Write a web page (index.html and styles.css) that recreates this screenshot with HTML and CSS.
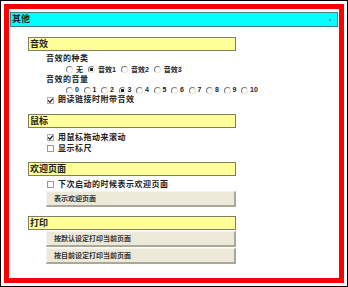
FILE: index.html
```html
<!doctype html>
<html>
<head>
	<meta charset="utf-8">
	<title>其他</title>
	<link rel="stylesheet" href="styles.css">
</head>
<body>
	<div class="frame">
		<div class="panel">
			<div class="title"><span>其他</span><span class="title__dot"></span></div>

			<div class="section section--sound">
				<div class="bar">音效</div>
				<div class="row row--label">音效的种类</div>
				<div class="row row--radios">
					<span class="opt"><i class="radio"></i>无</span>
					<span class="opt"><i class="radio radio--on"></i>音效1</span>
					<span class="opt"><i class="radio"></i>音效2</span>
					<span class="opt"><i class="radio"></i>音效3</span>
				</div>
				<div class="row row--label row--short">音效的音量</div>
				<div class="row row--radios row--short row--nums">
					<span class="opt"><i class="radio"></i>0</span>
					<span class="opt"><i class="radio"></i>1</span>
					<span class="opt"><i class="radio"></i>2</span>
					<span class="opt"><i class="radio radio--on"></i>3</span>
					<span class="opt"><i class="radio"></i>4</span>
					<span class="opt"><i class="radio"></i>5</span>
					<span class="opt"><i class="radio"></i>6</span>
					<span class="opt"><i class="radio"></i>7</span>
					<span class="opt"><i class="radio"></i>8</span>
					<span class="opt"><i class="radio"></i>9</span>
					<span class="opt"><i class="radio"></i>10</span>
				</div>
				<div class="row row--check row--short">
					<i class="check check--on"><svg viewBox="0 0 7 7" width="7" height="7"><path d="M1.2 3.4 L2.9 5.2 L5.8 1.6" fill="none" stroke="#222" stroke-width="1.3"/></svg></i>朗读链接时附带音效
				</div>
			</div>

			<div class="section section--mouse">
				<div class="bar">鼠标</div>
				<div class="row row--check">
					<i class="check check--on"><svg viewBox="0 0 7 7" width="7" height="7"><path d="M1.2 3.4 L2.9 5.2 L5.8 1.6" fill="none" stroke="#222" stroke-width="1.3"/></svg></i>用鼠标拖动来滚动
				</div>
				<div class="row row--check">
					<i class="check"></i>显示标尺
				</div>
			</div>

			<div class="section section--welcome">
				<div class="bar">欢迎页面</div>
				<div class="row row--check">
					<i class="check"></i>下次启动的时候表示欢迎页面
				</div>
				<button class="btn">表示欢迎页面</button>
			</div>

			<div class="section section--print">
				<div class="bar">打印</div>
				<button class="btn">按默认设定打印当前页面</button>
				<button class="btn">按目前设定打印当前页面</button>
			</div>
		</div>
	</div>
</body>
</html>
```
FILE: styles.css
```css
html, body { margin: 0; padding: 0; background: #fff; }
body { font-family: "Liberation Sans", "Noto Sans CJK SC", sans-serif; font-size: 8px; color: #222; }

.frame { width: 348px; height: 287px; box-sizing: border-box; border: 1px solid #000; padding: 3px; background: #fff; }
.panel { height: 100%; box-sizing: border-box; border: 5px solid #f00; padding: 3px 1px 0 1px; }

.title { height: 15px; box-sizing: border-box; border: 1px solid #3f7f7f; background: #0ff; font-weight: bold; font-size: 9px; line-height: 13px; padding: 0 6px 0 1px; display: flex; justify-content: space-between; align-items: center; }
.title__dot { width: 2px; height: 2px; background: #6a9a9a; }

.section { margin-left: 18px; width: 208px; }
.section--sound { margin-top: 10px; }
.section--mouse { margin-top: 9px; }
.section--welcome { margin-top: 8px; }
.section--print { margin-top: 9px; }

.bar { height: 14px; box-sizing: border-box; border: 1px solid #7f7f5f; background: #ffff99; font-weight: bold; font-size: 9px; line-height: 12px; padding-left: 1px; }

.row { height: 11px; line-height: 11px; font-weight: bold; letter-spacing: 0.5px; white-space: nowrap; display: flex; align-items: center; }
.row--short { height: 10px; line-height: 10px; }
.section--sound .bar + .row { margin-top: 2px; }
.section--mouse .bar + .row { margin-top: 4px; }
.section--welcome .bar + .row { margin-top: 3px; }

.row--label { padding-left: 18px; }
.row--radios { padding-left: 38px; font-size: 7px; letter-spacing: 0; }
.row--check { padding-left: 19px; }

.opt { display: inline-flex; align-items: center; margin-right: 5px; }
.row--nums .opt { margin-right: 4.6px; }

.radio { display: inline-block; width: 7px; height: 7px; box-sizing: border-box; border-radius: 50%; border: 1px solid; border-color: #7a7a7a #e2e2e2 #e2e2e2 #7a7a7a; margin-right: 3px; }
.row--nums .radio { margin-right: 2px; }
.radio--on { background: radial-gradient(circle, #222 0, #222 1.4px, transparent 1.8px); }

.check { display: inline-flex; width: 7px; height: 7px; box-sizing: border-box; border: 1px solid #9a9a9a; margin-right: 4px; align-items: center; justify-content: center; }
.check--on { border-color: #b0b0b0; }
.check svg { display: block; margin: -1px; flex: none; }

.btn { display: block; margin: 1px 0 0 18px; width: 190px; height: 16px; box-sizing: border-box; padding: 0 0 0 7px; text-align: left; background: #ece9d8; border: 0; border-top: 1px solid #f4f3ec; border-left: 1px solid #f4f3ec; border-right: 2px solid #aca899; border-bottom: 2px solid #aca899; font-family: "Liberation Sans", "Noto Sans CJK SC", sans-serif; font-size: 7px; font-weight: bold; color: #333; letter-spacing: 0; line-height: 12px; }
.section--print .btn + .btn { margin-top: 1px; }
```
